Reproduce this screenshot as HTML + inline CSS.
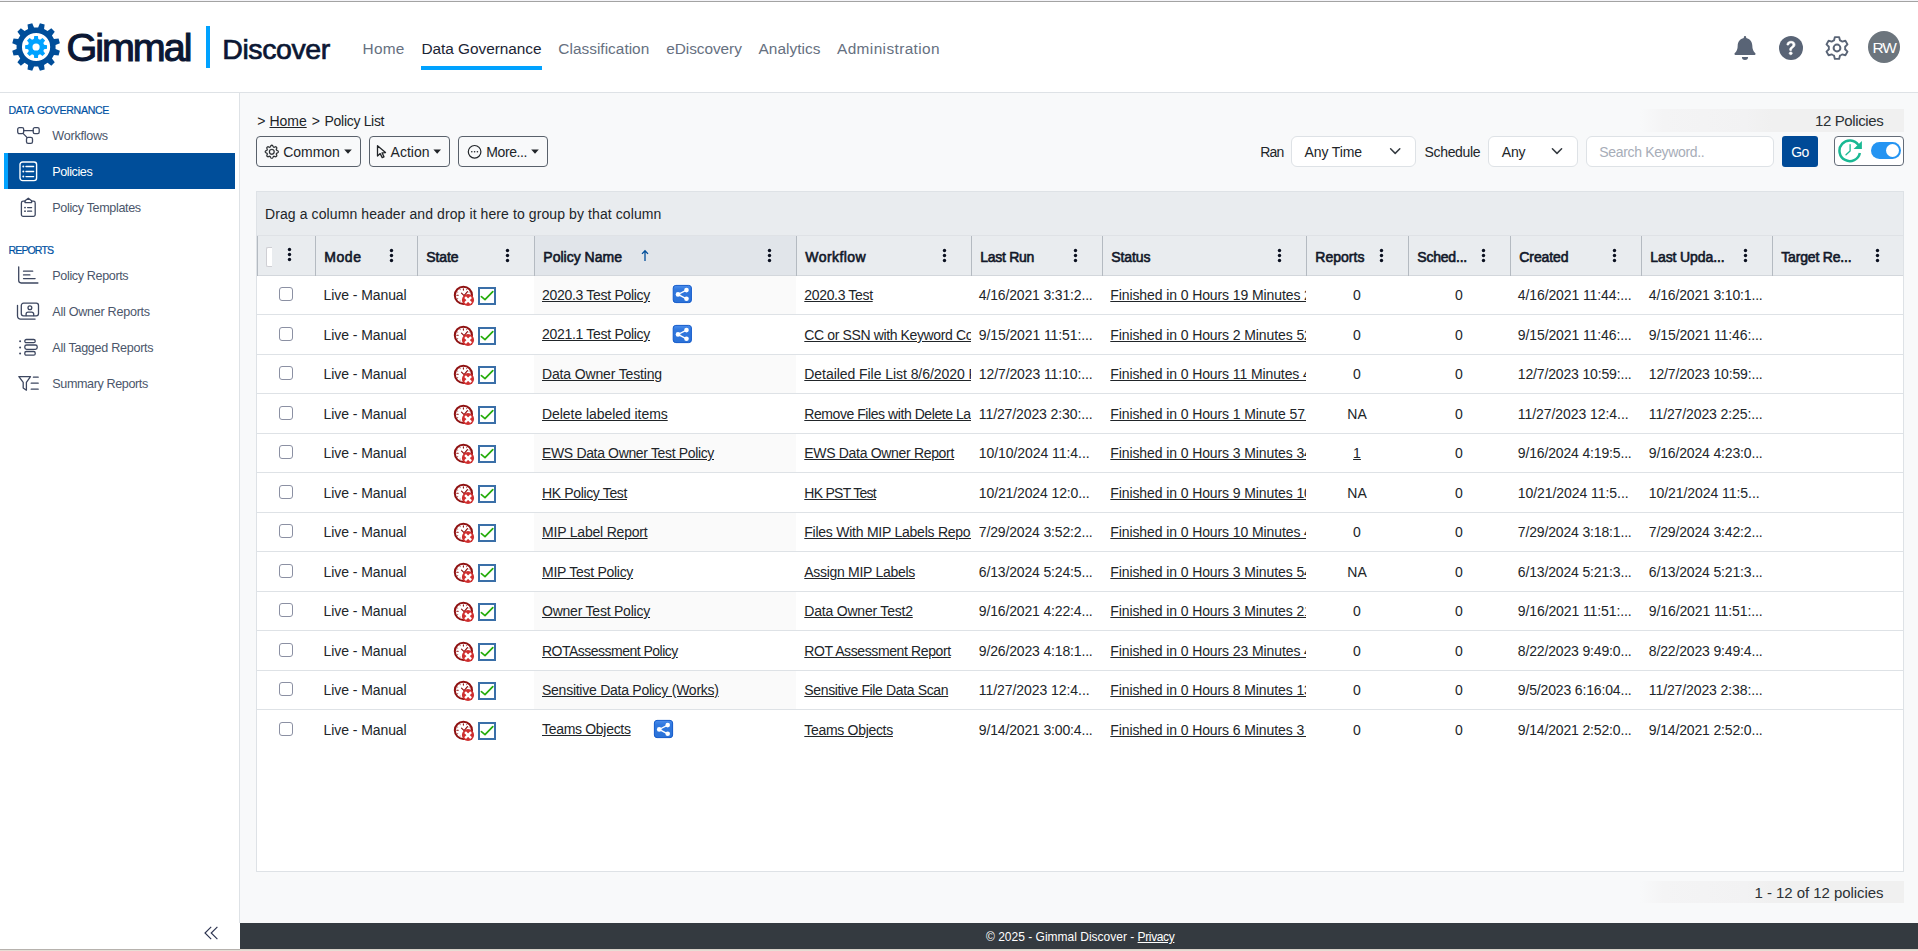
<!DOCTYPE html>
<html lang="en">
<head>
<meta charset="utf-8">
<title>Policy List - Gimmal Discover</title>
<style>
html,body{margin:0;padding:0}
body{width:1918px;height:951px;overflow:hidden;background:#fff;position:relative;font-family:"Liberation Sans",sans-serif;color:#212529}
.a{position:absolute;display:block}
.t{position:absolute;white-space:pre;line-height:1;display:block}
.clip{overflow:hidden}
.top{position:absolute;left:0;top:0;width:1918px;height:2px;background:linear-gradient(#f4f4f8 0,#f4f4f8 50%,#a3a3a3 50%,#a3a3a3 100%);}
.bot{position:absolute;left:0;top:949px;width:1918px;height:2px;background:linear-gradient(#d9d2ca 0,#d9d2ca 50%,#e6ddd4 50%,#e6ddd4 100%)}
.bot2{position:absolute;left:0;top:949px;width:240px;height:1px;background:#b6b2ad}
</style>
</head>
<body>
<div class="a" style="left:0px;top:0px;width:1918px;height:92px;background:#fff;border-bottom:1px solid #dee2e6;"></div>
<svg class="a" style="left:12px;top:23px" width="48" height="48" ><path fill="#004e9a" fill-rule="evenodd" d="M26.12 4.49 L27.90 0.19 L32.65 1.46 L32.04 6.07 L35.59 8.12 L39.29 5.29 L42.76 8.76 L39.93 12.46 L41.98 16.01 L46.59 15.40 L47.86 20.15 L43.56 21.93 L43.56 26.03 L47.86 27.81 L46.59 32.56 L41.98 31.95 L39.93 35.50 L42.76 39.20 L39.29 42.67 L35.59 39.84 L32.04 41.89 L32.65 46.50 L27.90 47.77 L26.12 43.47 L22.02 43.47 L20.24 47.77 L15.49 46.50 L16.10 41.89 L12.55 39.84 L8.85 42.67 L5.38 39.20 L8.21 35.50 L6.16 31.95 L1.55 32.56 L0.28 27.81 L4.58 26.03 L4.58 21.93 L0.28 20.15 L1.55 15.40 L6.16 16.01 L8.21 12.46 L5.38 8.76 L8.85 5.29 L12.55 8.12 L16.10 6.07 L15.49 1.46 L20.24 0.19 L22.02 4.49Z M24.07 9.88a14.1 14.1 0 1 0 0 28.2a14.1 14.1 0 1 0 0-28.2z"/><path fill="#00a2ff" fill-rule="evenodd" d="M21.82 15.99 L22.25 13.03 L25.89 13.03 L26.32 15.99 L28.13 16.74 L30.52 14.95 L33.10 17.53 L31.31 19.92 L32.06 21.73 L35.02 22.16 L35.02 25.80 L32.06 26.23 L31.31 28.04 L33.10 30.43 L30.52 33.01 L28.13 31.22 L26.32 31.97 L25.89 34.93 L22.25 34.93 L21.82 31.97 L20.01 31.22 L17.62 33.01 L15.04 30.43 L16.83 28.04 L16.08 26.23 L13.12 25.80 L13.12 22.16 L16.08 21.73 L16.83 19.92 L15.04 17.53 L17.62 14.95 L20.01 16.74Z M24.07 20.38a3.6 3.6 0 1 0 0 7.2a3.6 3.6 0 1 0 0-7.2z"/></svg>
<span class="t" style="left:66.50px;top:28px;font-size:39.5px;letter-spacing:-2.010px;color:#0b1733;-webkit-text-stroke:1.1px #0b1733;">Gimmal</span>
<div class="a" style="left:206px;top:26px;width:4px;height:42px;background:#00a2ff;"></div>
<span class="t" style="left:222.30px;top:35px;font-size:28.5px;letter-spacing:-0.420px;color:#0b1733;-webkit-text-stroke:0.7px #0b1733;">Discover</span>
<span class="t" style="left:362.60px;top:41px;font-size:15.4px;letter-spacing:0.234px;color:#66707f;">Home</span>
<span class="t" style="left:421.50px;top:41px;font-size:15.4px;letter-spacing:-0.043px;color:#1b2434;">Data Governance</span>
<span class="t" style="left:558.30px;top:41px;font-size:15.4px;letter-spacing:0.023px;color:#66707f;">Classification</span>
<span class="t" style="left:666.30px;top:41px;font-size:15.4px;letter-spacing:-0.062px;color:#66707f;">eDiscovery</span>
<span class="t" style="left:758.50px;top:41px;font-size:15.4px;letter-spacing:0.045px;color:#66707f;">Analytics</span>
<span class="t" style="left:837.00px;top:41px;font-size:15.4px;letter-spacing:0.392px;color:#66707f;">Administration</span>
<div class="a" style="left:421px;top:66px;width:121px;height:4px;background:#00a2ff;"></div>
<svg class="a" style="left:1733px;top:36px" width="24" height="25" ><path fill="#596476" d="M12 0a1.2 1.2 0 0 1 1.2 1.2v0.9C17 2.9 19.3 6 19.3 9.6C19.3 13.5 20.3 15.3 22.3 17.2a1 1 0 0 1-0.7 1.7H2.4a1 1 0 0 1-0.7-1.7C3.7 15.3 4.7 13.5 4.7 9.6C4.7 6 7 2.9 10.8 2.1V1.2A1.2 1.2 0 0 1 12 0Z"/><path fill="#596476" d="M8.9 21.1H15.1a3.1 2.9 0 0 1-6.2 0z"/></svg>
<svg class="a" style="left:1779px;top:36px" width="24" height="24" ><g transform="translate(0.000 0.000) scale(1.5000)"><circle cx="8" cy="8" r="8" fill="#596476"/><path fill="#fff" stroke="#fff" stroke-width="0.45" stroke-linejoin="round" d="M5.496 6.033h.825c.138 0 .248-.113.266-.25.09-.656.54-1.134 1.342-1.134.686 0 1.314.343 1.314 1.168 0 .635-.374.927-.965 1.371-.673.489-1.206 1.06-1.168 1.987l.003.217a.25.25 0 0 0 .25.246h.811a.25.25 0 0 0 .25-.25v-.105c0-.718.273-.927 1.01-1.486.609-.463 1.244-.977 1.244-2.056 0-1.511-1.276-2.241-2.673-2.241-1.267 0-2.655.59-2.75 2.286a.237.237 0 0 0 .241.247zm2.325 6.443c.61 0 1.029-.394 1.029-.927 0-.552-.42-.94-1.029-.94-.584 0-1.009.388-1.009.94 0 .533.425.927 1.01.927z"/></g></svg>
<svg class="a" style="left:1825px;top:36px" width="24" height="24" ><path fill="none" stroke="#596476" stroke-width="1.9" stroke-linejoin="round" d="M9.06 4.34L9.88 1.10L14.12 1.10L14.94 4.34A8.2 8.2 0 0 1 17.16 5.63L20.38 4.72L22.50 8.39L20.10 10.72A8.2 8.2 0 0 1 20.10 13.28L22.50 15.61L20.38 19.28L17.16 18.37A8.2 8.2 0 0 1 14.94 19.66L14.12 22.90L9.88 22.90L9.06 19.66A8.2 8.2 0 0 1 6.84 18.37L3.62 19.28L1.50 15.61L3.90 13.28A8.2 8.2 0 0 1 3.90 10.72L1.50 8.39L3.62 4.72L6.84 5.63A8.2 8.2 0 0 1 9.06 4.34Z"/><circle cx="12" cy="12" r="3.4" fill="none" stroke="#596476" stroke-width="2"/></svg>
<div class="a" style="left:1868px;top:31px;width:32px;height:32px;background:#6c757d;border-radius:50%;"></div>
<span class="t" style="left:1872.50px;top:40px;font-size:15.5px;letter-spacing:-1.273px;color:#fff;">RW</span>
<div class="a" style="left:0px;top:93px;width:240px;height:856px;background:#fff;"></div>
<div class="a" style="left:239px;top:93px;width:1px;height:830px;background:#dee2e6;"></div>
<span class="t" style="left:8.50px;top:105px;font-size:10.6px;letter-spacing:-0.319px;color:#0052a3;-webkit-text-stroke:0.2px #0052a3;word-spacing:1px;">DATA GOVERNANCE</span>
<span class="t" style="left:8.50px;top:245px;font-size:10.6px;letter-spacing:-0.919px;color:#0052a3;-webkit-text-stroke:0.2px #0052a3;">REPORTS</span>
<div class="a" style="left:4px;top:153px;width:231px;height:36px;background:#004e9a;border-left:4px solid #00a2ff;box-sizing:border-box;"></div>
<span class="t" style="left:52.30px;top:130px;font-size:12.6px;letter-spacing:-0.251px;color:#4b566b;">Workflows</span>
<span class="t" style="left:52.30px;top:166px;font-size:12.6px;letter-spacing:-0.426px;color:#fff;">Policies</span>
<span class="t" style="left:52.30px;top:202px;font-size:12.6px;letter-spacing:-0.360px;color:#4b566b;">Policy Templates</span>
<span class="t" style="left:52.30px;top:270px;font-size:12.6px;letter-spacing:-0.372px;color:#4b566b;">Policy Reports</span>
<span class="t" style="left:52.30px;top:306px;font-size:12.6px;letter-spacing:-0.276px;color:#4b566b;">All Owner Reports</span>
<span class="t" style="left:52.30px;top:342px;font-size:12.6px;letter-spacing:-0.288px;color:#4b566b;">All Tagged Reports</span>
<span class="t" style="left:52.30px;top:378px;font-size:12.6px;letter-spacing:-0.399px;color:#4b566b;">Summary Reports</span>
<svg class="a" style="left:16px;top:126px" width="26" height="20" ><g fill="none" stroke="#3d4760" stroke-width="1.3" stroke-linecap="round" stroke-linejoin="round"><rect x="1.7" y="1.7" width="6" height="6" rx="1.6"/><rect x="17.2" y="1.7" width="6" height="6" rx="1.6"/><rect x="10.5" y="11.3" width="6" height="6" rx="1.6"/><path d="M7.7 4.7H17.2M7 7.4L11.2 11.6"/></g></svg>
<svg class="a" style="left:19px;top:161px" width="19" height="21" ><g fill="none" stroke="#fff" stroke-width="1.4" stroke-linecap="round"><rect x="1" y="1" width="16.6" height="18.6" rx="2.6"/><path d="M7 5.5H14.6M7 10.5H14.6M7 15.6H14.6"/></g><g fill="#fff"><circle cx="4.3" cy="5.5" r="1"/><circle cx="4.3" cy="10.5" r="1"/><circle cx="4.3" cy="15.6" r="1"/></g></svg>
<svg class="a" style="left:20px;top:197px" width="17" height="21" ><g fill="none" stroke="#3d4760" stroke-width="1.3" stroke-linecap="round" stroke-linejoin="round"><path d="M5 4.2H3.2a1.8 1.8 0 0 0-1.8 1.8V17.6a1.8 1.8 0 0 0 1.8 1.8H13.4a1.8 1.8 0 0 0 1.8-1.8V6a1.8 1.8 0 0 0-1.8-1.8H11.6"/><path d="M5 5.6V3.8L8.3 1.2L11.6 3.8V5.6Z"/><path d="M7.6 10.6H11.6M7.6 14.2H11.6"/></g><g fill="#3d4760"><circle cx="5" cy="10.6" r="0.9"/><circle cx="5" cy="14.2" r="0.9"/></g></svg>
<svg class="a" style="left:17px;top:266px" width="23" height="18" ><g transform="translate(0.500 0.000)"><g fill="none" stroke="#3d4760" stroke-width="1.3" stroke-linecap="round" stroke-linejoin="round"><path d="M1.2 0.8V14.6a2.4 2.4 0 0 0 2.4 2.4H20.4"/><path d="M6 5.2H15.2M6 8.9H12.4M6 12.6H17.6"/></g></g></svg>
<svg class="a" style="left:16px;top:302px" width="24" height="19" ><g transform="translate(0.500 0.300)"><g fill="none" stroke="#3d4760" stroke-width="1.3" stroke-linecap="round" stroke-linejoin="round"><rect x="4.8" y="0.9" width="17.2" height="12.6" rx="2.2"/><path d="M1 3V13.8a3 3 0 0 0 3 3H18.6"/><circle cx="13.4" cy="5.4" r="1.9"/><path d="M9.6 13.2V11.8a2 2 0 0 1 2-2H15.2a2 2 0 0 1 2 2V13.2"/></g></g></svg>
<svg class="a" style="left:18px;top:338px" width="21" height="19" ><g transform="translate(0.800 0.600)"><g fill="none" stroke="#3d4760" stroke-width="1.3" stroke-linecap="round" stroke-linejoin="round"><rect x="6" y="0.9" width="10.4" height="3.2" rx="1.5"/><rect x="6" y="6.4" width="12.4" height="4.4" rx="1.8"/><rect x="6" y="12.9" width="10.4" height="3.7" rx="1.5"/></g><g fill="#3d4760"><circle cx="1.3" cy="2.6" r="1"/><circle cx="1.3" cy="8.8" r="1"/><circle cx="1.3" cy="15" r="1"/></g></g></svg>
<svg class="a" style="left:18px;top:375px" width="21" height="17" ><g transform="translate(0.000 0.600)"><g fill="none" stroke="#3d4760" stroke-width="1.3" stroke-linecap="round" stroke-linejoin="round"><path d="M0.9 1H12.5L8.4 6.8V14.6L5.2 12.4V6.8Z"/><path d="M15.4 1.6H20.2M13.2 7.6H20.2M13.2 13.6H20.2"/></g></g></svg>
<svg class="a" style="left:204px;top:926px" width="15" height="14" ><g fill="none" stroke="#2c3350" stroke-width="1.15" stroke-linecap="butt" stroke-linejoin="miter"><path d="M7.2 0.9L1 7L7.2 13.1M13.4 0.9L7.2 7L13.4 13.1"/></g></svg>
<div class="a" style="left:240px;top:93px;width:1678px;height:830px;background:#f8f9fa;"></div>
<span class="t" style="left:257.20px;top:114px;font-size:14px;letter-spacing:-0.188px;color:#212529;">&gt;</span>
<span class="t" style="left:269.50px;top:114px;font-size:14px;letter-spacing:-0.040px;color:#212529;text-decoration:underline;">Home</span>
<span class="t" style="left:311.80px;top:114px;font-size:14px;letter-spacing:-0.188px;color:#212529;">&gt;</span>
<span class="t" style="left:324.60px;top:114px;font-size:14px;letter-spacing:-0.312px;color:#212529;">Policy List</span>
<div class="a" style="left:256px;top:136px;width:105px;height:31px;border:1px solid #59616b;border-radius:4px;box-sizing:border-box;background:#f8f9fa;"></div>
<div class="a" style="left:369px;top:136px;width:81px;height:31px;border:1px solid #59616b;border-radius:4px;box-sizing:border-box;background:#f8f9fa;"></div>
<div class="a" style="left:458px;top:136px;width:90px;height:31px;border:1px solid #59616b;border-radius:4px;box-sizing:border-box;background:#f8f9fa;"></div>
<svg class="a" style="left:264px;top:144px" width="15" height="15" ><g transform="translate(0.800 0.800) scale(0.8750)"><g stroke="#212529" stroke-width="0.35"><path fill="#212529" d="M8 4.754a3.246 3.246 0 1 0 0 6.492 3.246 3.246 0 0 0 0-6.492zM5.754 8a2.246 2.246 0 1 1 4.492 0 2.246 2.246 0 0 1-4.492 0z"/><path fill="#212529" d="M9.796 1.343c-.527-1.79-3.065-1.79-3.592 0l-.094.319a.873.873 0 0 1-1.255.52l-.292-.16c-1.64-.892-3.433.902-2.54 2.541l.159.292a.873.873 0 0 1-.52 1.255l-.319.094c-1.79.527-1.79 3.065 0 3.592l.319.094a.873.873 0 0 1 .52 1.255l-.16.292c-.892 1.64.901 3.434 2.541 2.54l.292-.159a.873.873 0 0 1 1.255.52l.094.319c.527 1.79 3.065 1.79 3.592 0l.094-.319a.873.873 0 0 1 1.255-.52l.292.16c1.64.893 3.434-.902 2.54-2.541l-.159-.292a.873.873 0 0 1 .52-1.255l.319-.094c1.79-.527 1.79-3.065 0-3.592l-.319-.094a.873.873 0 0 1-.52-1.255l.16-.292c.893-1.64-.902-3.433-2.541-2.54l-.292.159a.873.873 0 0 1-1.255-.52l-.094-.319zm-2.633.283c.246-.835 1.428-.835 1.674 0l.094.319a1.873 1.873 0 0 0 2.693 1.115l.291-.16c.764-.415 1.6.42 1.184 1.185l-.159.292a1.873 1.873 0 0 0 1.116 2.692l.318.094c.835.246.835 1.428 0 1.674l-.319.094a1.873 1.873 0 0 0-1.115 2.693l.16.291c.415.764-.42 1.6-1.185 1.184l-.291-.159a1.873 1.873 0 0 0-2.693 1.116l-.094.318c-.246.835-1.428.835-1.674 0l-.094-.319a1.873 1.873 0 0 0-2.692-1.115l-.292.16c-.764.415-1.6-.42-1.184-1.185l.159-.291A1.873 1.873 0 0 0 1.945 8.93l-.319-.094c-.835-.246-.835-1.428 0-1.674l.319-.094A1.873 1.873 0 0 0 3.06 4.377l-.16-.292c-.415-.764.42-1.6 1.185-1.184l.292.159a1.873 1.873 0 0 0 2.692-1.115l.094-.319z"/></g></g></svg>
<span class="t" style="left:283.30px;top:145px;font-size:14px;letter-spacing:-0.049px;color:#212529;">Common</span>
<svg class="a" style="left:344px;top:149px" width="9" height="6" ><g transform="translate(0.200 0.500)"><path fill="#212529" d="M0 0H7.6L3.8 4.2Z"/></g></svg>
<svg class="a" style="left:376px;top:144px" width="11" height="15" ><g transform="translate(0.600 0.800)"><path fill="none" stroke="#212529" stroke-width="1.3" stroke-linejoin="round" d="M0.9 0.9V11.2L3.6 8.8L5.6 12.8L7.4 12L5.5 8.1L8.9 7.8Z"/></g></svg>
<span class="t" style="left:390.50px;top:145px;font-size:14px;letter-spacing:0.046px;color:#212529;">Action</span>
<svg class="a" style="left:433px;top:149px" width="9" height="6" ><g transform="translate(0.400 0.500)"><path fill="#212529" d="M0 0H7.6L3.8 4.2Z"/></g></svg>
<svg class="a" style="left:467px;top:144px" width="15" height="15" ><g transform="translate(0.600 0.800)"><circle cx="7" cy="7" r="6.3" fill="none" stroke="#212529" stroke-width="1.2"/><g fill="#212529"><circle cx="4.2" cy="7" r="0.8"/><circle cx="7" cy="7" r="0.8"/><circle cx="9.8" cy="7" r="0.8"/></g></g></svg>
<span class="t" style="left:486.30px;top:145px;font-size:14px;letter-spacing:-0.397px;color:#212529;">More...</span>
<svg class="a" style="left:531px;top:149px" width="9" height="6" ><g transform="translate(0.200 0.500)"><path fill="#212529" d="M0 0H7.6L3.8 4.2Z"/></g></svg>
<div class="a" style="left:1640px;top:109px;width:264px;height:23px;background:linear-gradient(90deg,rgba(244,244,245,0) 0%,#f4f4f5 9%,#f2f2f3 40%,#f0f0f0 50%,#f0f0f0 100%);"></div>
<span class="t" style="left:1815.00px;top:113px;font-size:15px;letter-spacing:-0.386px;color:#2b3035;">12 Policies</span>
<span class="t" style="left:1260.30px;top:145px;font-size:14px;letter-spacing:-0.896px;color:#212529;">Ran</span>
<div class="a" style="left:1291px;top:136px;width:125px;height:31px;border:1px solid #dee2e6;border-radius:6px;box-sizing:border-box;background:#fff;"></div>
<span class="t" style="left:1304.60px;top:145px;font-size:14px;letter-spacing:-0.120px;color:#212529;">Any Time</span>
<svg class="a" style="left:1389px;top:147px" width="13" height="8" ><g transform="translate(0.600 0.800)"><path fill="none" stroke="#343a40" stroke-width="1.5" stroke-linecap="round" stroke-linejoin="round" d="M1 1L5.6 5.6L10.2 1"/></g></svg>
<span class="t" style="left:1424.60px;top:145px;font-size:14px;letter-spacing:-0.361px;color:#212529;">Schedule</span>
<div class="a" style="left:1488px;top:136px;width:90px;height:31px;border:1px solid #dee2e6;border-radius:6px;box-sizing:border-box;background:#fff;"></div>
<span class="t" style="left:1501.80px;top:145px;font-size:14px;letter-spacing:-0.242px;color:#212529;">Any</span>
<svg class="a" style="left:1551px;top:147px" width="13" height="8" ><g transform="translate(0.400 0.800)"><path fill="none" stroke="#343a40" stroke-width="1.5" stroke-linecap="round" stroke-linejoin="round" d="M1 1L5.6 5.6L10.2 1"/></g></svg>
<div class="a" style="left:1586px;top:136px;width:188px;height:31px;border:1px solid #dee2e6;border-radius:6px;box-sizing:border-box;background:#fff;"></div>
<span class="t" style="left:1599.30px;top:145px;font-size:14px;letter-spacing:-0.344px;color:#a7adb8;">Search Keyword..</span>
<div class="a" style="left:1782px;top:136px;width:36px;height:31px;background:#004a97;border-radius:3px;"></div>
<span class="t" style="left:1791.20px;top:145px;font-size:14px;letter-spacing:-0.544px;color:#fff;">Go</span>
<div class="a" style="left:1834px;top:136px;width:70px;height:30px;border:1px solid #646c78;border-radius:4px;box-sizing:border-box;background:#fff;"></div>
<svg class="a" style="left:1838px;top:139px" width="25" height="24" ><path fill="none" stroke="#19b893" stroke-width="2.5" d="M20.44 6.19A10.3 10.3 0 1 0 21.87 13.94"/><path fill="#19b893" d="M23.9 1.9V9.9H15.6Z"/><path fill="none" stroke="#19b893" stroke-width="1.3" stroke-linecap="round" stroke-linejoin="round" d="M12.1 5.6V12L8 15.7"/></svg>
<div class="a" style="left:1871px;top:142px;width:30px;height:17px;background:#2494f2;border-radius:8.5px;"></div>
<div class="a" style="left:1885.9px;top:143.8px;width:13.4px;height:13.4px;background:#fff;border-radius:50%;"></div>
<div class="a" style="left:256px;top:191px;width:1648px;height:681px;background:#fff;border:1px solid #dee2e6;box-sizing:border-box;"></div>
<div class="a" style="left:257px;top:192px;width:1646px;height:43px;background:#e9ecef;"></div>
<span class="t" style="left:265.00px;top:207px;font-size:14px;letter-spacing:0.095px;color:#212529;">Drag a column header and drop it here to group by that column</span>
<div class="a" style="left:257px;top:235px;width:1646px;height:41px;background:#e9ecef;border-bottom:1px solid #d3d7dc;border-top:1px solid #dfe2e6;box-sizing:border-box;"></div>
<div class="a" style="left:535px;top:236px;width:262px;height:39px;background:#e1e5ea;"></div>
<div class="a" style="left:257px;top:236px;width:1px;height:40px;background:#b4bac1;"></div>
<div class="a" style="left:315px;top:236px;width:1px;height:40px;background:#b4bac1;"></div>
<div class="a" style="left:417px;top:236px;width:1px;height:40px;background:#b4bac1;"></div>
<div class="a" style="left:534px;top:236px;width:1px;height:40px;background:#b4bac1;"></div>
<div class="a" style="left:796px;top:236px;width:1px;height:40px;background:#b4bac1;"></div>
<div class="a" style="left:971px;top:236px;width:1px;height:40px;background:#b4bac1;"></div>
<div class="a" style="left:1102px;top:236px;width:1px;height:40px;background:#b4bac1;"></div>
<div class="a" style="left:1306px;top:236px;width:1px;height:40px;background:#b4bac1;"></div>
<div class="a" style="left:1408px;top:236px;width:1px;height:40px;background:#b4bac1;"></div>
<div class="a" style="left:1510px;top:236px;width:1px;height:40px;background:#b4bac1;"></div>
<div class="a" style="left:1641px;top:236px;width:1px;height:40px;background:#b4bac1;"></div>
<div class="a" style="left:1772px;top:236px;width:1px;height:40px;background:#b4bac1;"></div>
<div class="a" style="left:266px;top:247px;width:6px;height:20px;background:#fff;border-radius:2px 0 0 2px;border:1px solid #cfcfd4;border-right:0;box-sizing:border-box;"></div>
<span class="t" style="left:324.30px;top:250px;font-size:14px;letter-spacing:0.542px;color:#121829;-webkit-text-stroke:0.6px #121829;">Mode</span>
<span class="t" style="left:426.30px;top:250px;font-size:14px;letter-spacing:-0.101px;color:#121829;-webkit-text-stroke:0.6px #121829;">State</span>
<span class="t" style="left:543.30px;top:250px;font-size:14px;letter-spacing:0.010px;color:#121829;-webkit-text-stroke:0.6px #121829;">Policy Name</span>
<span class="t" style="left:805.30px;top:250px;font-size:14px;letter-spacing:0.423px;color:#121829;-webkit-text-stroke:0.6px #121829;">Workflow</span>
<span class="t" style="left:980.30px;top:250px;font-size:14px;letter-spacing:-0.293px;color:#121829;-webkit-text-stroke:0.6px #121829;">Last Run</span>
<span class="t" style="left:1111.30px;top:250px;font-size:14px;letter-spacing:-0.084px;color:#121829;-webkit-text-stroke:0.6px #121829;">Status</span>
<span class="t" style="left:1315.30px;top:250px;font-size:14px;letter-spacing:0.024px;color:#121829;-webkit-text-stroke:0.6px #121829;">Reports</span>
<span class="t" style="left:1417.30px;top:250px;font-size:14px;letter-spacing:-0.209px;color:#121829;-webkit-text-stroke:0.6px #121829;">Sched...</span>
<span class="t" style="left:1519.30px;top:250px;font-size:14px;letter-spacing:-0.087px;color:#121829;-webkit-text-stroke:0.6px #121829;">Created</span>
<span class="t" style="left:1650.30px;top:250px;font-size:14px;letter-spacing:-0.108px;color:#121829;-webkit-text-stroke:0.6px #121829;">Last Upda...</span>
<span class="t" style="left:1781.30px;top:250px;font-size:14px;letter-spacing:-0.181px;color:#121829;-webkit-text-stroke:0.6px #121829;">Target Re...</span>
<svg class="a" style="left:287px;top:247px" width="5" height="15" ><g transform="translate(0.500 0.500)"><g fill="#0b1020"><circle cx="2" cy="2" r="1.7"/><circle cx="2" cy="7" r="1.7"/><circle cx="2" cy="12" r="1.7"/></g></g></svg>
<svg class="a" style="left:389px;top:248px" width="5" height="15" ><g transform="translate(0.500 0.500)"><g fill="#0b1020"><circle cx="2" cy="2" r="1.7"/><circle cx="2" cy="7" r="1.7"/><circle cx="2" cy="12" r="1.7"/></g></g></svg>
<svg class="a" style="left:505px;top:248px" width="5" height="15" ><g transform="translate(0.500 0.500)"><g fill="#0b1020"><circle cx="2" cy="2" r="1.7"/><circle cx="2" cy="7" r="1.7"/><circle cx="2" cy="12" r="1.7"/></g></g></svg>
<svg class="a" style="left:767px;top:248px" width="5" height="15" ><g transform="translate(0.500 0.500)"><g fill="#0b1020"><circle cx="2" cy="2" r="1.7"/><circle cx="2" cy="7" r="1.7"/><circle cx="2" cy="12" r="1.7"/></g></g></svg>
<svg class="a" style="left:942px;top:248px" width="5" height="15" ><g transform="translate(0.500 0.500)"><g fill="#0b1020"><circle cx="2" cy="2" r="1.7"/><circle cx="2" cy="7" r="1.7"/><circle cx="2" cy="12" r="1.7"/></g></g></svg>
<svg class="a" style="left:1073px;top:248px" width="5" height="15" ><g transform="translate(0.500 0.500)"><g fill="#0b1020"><circle cx="2" cy="2" r="1.7"/><circle cx="2" cy="7" r="1.7"/><circle cx="2" cy="12" r="1.7"/></g></g></svg>
<svg class="a" style="left:1277px;top:248px" width="5" height="15" ><g transform="translate(0.500 0.500)"><g fill="#0b1020"><circle cx="2" cy="2" r="1.7"/><circle cx="2" cy="7" r="1.7"/><circle cx="2" cy="12" r="1.7"/></g></g></svg>
<svg class="a" style="left:1379px;top:248px" width="5" height="15" ><g transform="translate(0.500 0.500)"><g fill="#0b1020"><circle cx="2" cy="2" r="1.7"/><circle cx="2" cy="7" r="1.7"/><circle cx="2" cy="12" r="1.7"/></g></g></svg>
<svg class="a" style="left:1481px;top:248px" width="5" height="15" ><g transform="translate(0.500 0.500)"><g fill="#0b1020"><circle cx="2" cy="2" r="1.7"/><circle cx="2" cy="7" r="1.7"/><circle cx="2" cy="12" r="1.7"/></g></g></svg>
<svg class="a" style="left:1612px;top:248px" width="5" height="15" ><g transform="translate(0.500 0.500)"><g fill="#0b1020"><circle cx="2" cy="2" r="1.7"/><circle cx="2" cy="7" r="1.7"/><circle cx="2" cy="12" r="1.7"/></g></g></svg>
<svg class="a" style="left:1743px;top:248px" width="5" height="15" ><g transform="translate(0.500 0.500)"><g fill="#0b1020"><circle cx="2" cy="2" r="1.7"/><circle cx="2" cy="7" r="1.7"/><circle cx="2" cy="12" r="1.7"/></g></g></svg>
<svg class="a" style="left:1875px;top:248px" width="5" height="15" ><g transform="translate(0.500 0.500)"><g fill="#0b1020"><circle cx="2" cy="2" r="1.7"/><circle cx="2" cy="7" r="1.7"/><circle cx="2" cy="12" r="1.7"/></g></g></svg>
<svg class="a" style="left:641px;top:249px" width="8" height="13" ><g transform="translate(0.000 0.500)"><path d="M4 11.4V1.4M1 4.4L4 1.2L7 4.4" fill="none" stroke="#004e9a" stroke-width="1.3" stroke-linejoin="miter"/></g></svg>
<div class="a" style="left:534px;top:276px;width:262px;height:38px;background:#fafafa;"></div>
<div class="a" style="left:257px;top:314px;width:1646px;height:1px;background:#dee2e6;"></div>
<div class="a" style="left:279px;top:287px;width:14px;height:14px;border:1px solid #8b90a3;border-radius:3px;box-sizing:border-box;background:#fff;"></div>
<span class="t" style="left:323.60px;top:288px;font-size:14px;letter-spacing:-0.081px;color:#212529;">Live - Manual</span>
<svg class="a" style="left:453px;top:285px" width="23" height="23" ><g transform="translate(0.500 0.100)"><circle cx="9.9" cy="10.2" r="8.6" fill="#fff" stroke="#8f1111" stroke-width="2"/><path d="M9.90 3.60L9.90 5.00" stroke="#8f1111" stroke-width="1.1" stroke-linecap="round"/><circle cx="13.20" cy="4.48" r="0.55" fill="#8f1111" opacity="0.8"/><circle cx="15.62" cy="6.90" r="0.55" fill="#8f1111" opacity="0.8"/><circle cx="6.60" cy="15.92" r="0.55" fill="#8f1111" opacity="0.8"/><circle cx="4.18" cy="13.50" r="0.55" fill="#8f1111" opacity="0.8"/><path d="M3.30 10.20L4.70 10.20" stroke="#8f1111" stroke-width="1.1" stroke-linecap="round"/><circle cx="4.18" cy="6.90" r="0.55" fill="#8f1111" opacity="0.8"/><circle cx="6.60" cy="4.48" r="0.55" fill="#8f1111" opacity="0.8"/><path d="M10.6 10.6L14 6.6M10.6 10.6L8 8" fill="none" stroke="#8f1111" stroke-width="1.2" stroke-linecap="round"/><circle cx="14.5" cy="14.9" r="6.1" fill="#cf2f2f"/><path d="M11.6 12L17.6 18M17.6 12L11.6 18" stroke="#fff" stroke-width="2.4" stroke-linecap="butt"/></g></svg>
<svg class="a" style="left:478px;top:287px" width="18" height="18" ><rect x="1" y="1" width="16" height="16" fill="#fff" stroke="#3a6fa8" stroke-width="2"/><path d="M3.4 9.6L7 12.6L14.8 4.6" fill="none" stroke="#25ac0a" stroke-width="1.7" stroke-linecap="round" stroke-linejoin="round"/></svg>
<span class="t" style="left:542.00px;top:288px;font-size:14px;letter-spacing:-0.299px;color:#212529;text-decoration:underline;">2020.3 Test Policy</span>
<svg class="a" style="left:671px;top:284px" width="22" height="20" ><g transform="translate(0.800 0.000)"><defs><linearGradient id="sg" x1="0" y1="0" x2="0" y2="1"><stop offset="0" stop-color="#4c8dec"/><stop offset="0.25" stop-color="#3078df"/><stop offset="1" stop-color="#2b72d8"/></linearGradient></defs><rect x="0.2" y="0.2" width="20.6" height="19.6" rx="3.4" fill="#fff" opacity="0.9"/><rect x="1.4" y="1.4" width="18.2" height="17.2" rx="2.6" fill="url(#sg)" stroke="#125aca" stroke-width="1"/><path d="M14.7 6.1L6.2 10.4L14.7 14.8" fill="none" stroke="#fff" stroke-width="1.3"/><g fill="#fff"><circle cx="6.2" cy="10.4" r="2.3"/><circle cx="14.7" cy="6.1" r="2.3"/><circle cx="14.7" cy="14.8" r="2.3"/></g></g></svg>
<span class="t" style="left:804.30px;top:288px;font-size:14px;letter-spacing:-0.340px;color:#212529;text-decoration:underline;">2020.3 Test</span>
<span class="t" style="left:978.80px;top:288px;font-size:14px;letter-spacing:-0.156px;color:#212529;">4/16/2021 3:31:2...</span>
<div class="a clip" style="left:1103px;top:276px;width:203px;height:38px"><span class="t" style="left:7.30px;top:12px;font-size:14px;color:#212529;text-decoration:underline;letter-spacing:-0.1px;">Finished in 0 Hours 19 Minutes 25 Seconds</span></div>
<span class="t" style="left:1353.10px;top:288px;font-size:14px;color:#212529;">0</span>
<span class="t" style="left:1455.10px;top:288px;font-size:14px;color:#212529;">0</span>
<span class="t" style="left:1517.80px;top:288px;font-size:14px;letter-spacing:-0.102px;color:#212529;">4/16/2021 11:44:...</span>
<span class="t" style="left:1648.80px;top:288px;font-size:14px;letter-spacing:-0.156px;color:#212529;">4/16/2021 3:10:1...</span>
<div class="a" style="left:257px;top:354px;width:1646px;height:1px;background:#dee2e6;"></div>
<div class="a" style="left:279px;top:327px;width:14px;height:14px;border:1px solid #8b90a3;border-radius:3px;box-sizing:border-box;background:#fff;"></div>
<span class="t" style="left:323.60px;top:328px;font-size:14px;letter-spacing:-0.081px;color:#212529;">Live - Manual</span>
<svg class="a" style="left:453px;top:325px" width="23" height="23" ><g transform="translate(0.500 0.100)"><circle cx="9.9" cy="10.2" r="8.6" fill="#fff" stroke="#8f1111" stroke-width="2"/><path d="M9.90 3.60L9.90 5.00" stroke="#8f1111" stroke-width="1.1" stroke-linecap="round"/><circle cx="13.20" cy="4.48" r="0.55" fill="#8f1111" opacity="0.8"/><circle cx="15.62" cy="6.90" r="0.55" fill="#8f1111" opacity="0.8"/><circle cx="6.60" cy="15.92" r="0.55" fill="#8f1111" opacity="0.8"/><circle cx="4.18" cy="13.50" r="0.55" fill="#8f1111" opacity="0.8"/><path d="M3.30 10.20L4.70 10.20" stroke="#8f1111" stroke-width="1.1" stroke-linecap="round"/><circle cx="4.18" cy="6.90" r="0.55" fill="#8f1111" opacity="0.8"/><circle cx="6.60" cy="4.48" r="0.55" fill="#8f1111" opacity="0.8"/><path d="M10.6 10.6L14 6.6M10.6 10.6L8 8" fill="none" stroke="#8f1111" stroke-width="1.2" stroke-linecap="round"/><circle cx="14.5" cy="14.9" r="6.1" fill="#cf2f2f"/><path d="M11.6 12L17.6 18M17.6 12L11.6 18" stroke="#fff" stroke-width="2.4" stroke-linecap="butt"/></g></svg>
<svg class="a" style="left:478px;top:327px" width="18" height="18" ><rect x="1" y="1" width="16" height="16" fill="#fff" stroke="#3a6fa8" stroke-width="2"/><path d="M3.4 9.6L7 12.6L14.8 4.6" fill="none" stroke="#25ac0a" stroke-width="1.7" stroke-linecap="round" stroke-linejoin="round"/></svg>
<span class="t" style="left:542.00px;top:327px;font-size:14px;letter-spacing:-0.299px;color:#212529;text-decoration:underline;">2021.1 Test Policy</span>
<svg class="a" style="left:671px;top:324px" width="22" height="20" ><g transform="translate(0.800 0.000)"><defs><linearGradient id="sg" x1="0" y1="0" x2="0" y2="1"><stop offset="0" stop-color="#4c8dec"/><stop offset="0.25" stop-color="#3078df"/><stop offset="1" stop-color="#2b72d8"/></linearGradient></defs><rect x="0.2" y="0.2" width="20.6" height="19.6" rx="3.4" fill="#fff" opacity="0.9"/><rect x="1.4" y="1.4" width="18.2" height="17.2" rx="2.6" fill="url(#sg)" stroke="#125aca" stroke-width="1"/><path d="M14.7 6.1L6.2 10.4L14.7 14.8" fill="none" stroke="#fff" stroke-width="1.3"/><g fill="#fff"><circle cx="6.2" cy="10.4" r="2.3"/><circle cx="14.7" cy="6.1" r="2.3"/><circle cx="14.7" cy="14.8" r="2.3"/></g></g></svg>
<div class="a clip" style="left:797px;top:315px;width:174px;height:39px"><span class="t" style="left:7.30px;top:13px;font-size:14px;color:#212529;text-decoration:underline;letter-spacing:-0.373px;">CC or SSN with Keyword Combo</span></div>
<span class="t" style="left:978.80px;top:328px;font-size:14px;letter-spacing:-0.102px;color:#212529;">9/15/2021 11:51:...</span>
<div class="a clip" style="left:1103px;top:315px;width:203px;height:39px"><span class="t" style="left:7.30px;top:13px;font-size:14px;color:#212529;text-decoration:underline;letter-spacing:-0.1px;">Finished in 0 Hours 2 Minutes 52 Seconds</span></div>
<span class="t" style="left:1353.10px;top:328px;font-size:14px;color:#212529;">0</span>
<span class="t" style="left:1455.10px;top:328px;font-size:14px;color:#212529;">0</span>
<span class="t" style="left:1517.80px;top:328px;font-size:14px;letter-spacing:-0.102px;color:#212529;">9/15/2021 11:46:...</span>
<span class="t" style="left:1648.80px;top:328px;font-size:14px;letter-spacing:-0.102px;color:#212529;">9/15/2021 11:46:...</span>
<div class="a" style="left:534px;top:355px;width:262px;height:38px;background:#fafafa;"></div>
<div class="a" style="left:257px;top:393px;width:1646px;height:1px;background:#dee2e6;"></div>
<div class="a" style="left:279px;top:366px;width:14px;height:14px;border:1px solid #8b90a3;border-radius:3px;box-sizing:border-box;background:#fff;"></div>
<span class="t" style="left:323.60px;top:367px;font-size:14px;letter-spacing:-0.081px;color:#212529;">Live - Manual</span>
<svg class="a" style="left:453px;top:364px" width="23" height="23" ><g transform="translate(0.500 0.100)"><circle cx="9.9" cy="10.2" r="8.6" fill="#fff" stroke="#8f1111" stroke-width="2"/><path d="M9.90 3.60L9.90 5.00" stroke="#8f1111" stroke-width="1.1" stroke-linecap="round"/><circle cx="13.20" cy="4.48" r="0.55" fill="#8f1111" opacity="0.8"/><circle cx="15.62" cy="6.90" r="0.55" fill="#8f1111" opacity="0.8"/><circle cx="6.60" cy="15.92" r="0.55" fill="#8f1111" opacity="0.8"/><circle cx="4.18" cy="13.50" r="0.55" fill="#8f1111" opacity="0.8"/><path d="M3.30 10.20L4.70 10.20" stroke="#8f1111" stroke-width="1.1" stroke-linecap="round"/><circle cx="4.18" cy="6.90" r="0.55" fill="#8f1111" opacity="0.8"/><circle cx="6.60" cy="4.48" r="0.55" fill="#8f1111" opacity="0.8"/><path d="M10.6 10.6L14 6.6M10.6 10.6L8 8" fill="none" stroke="#8f1111" stroke-width="1.2" stroke-linecap="round"/><circle cx="14.5" cy="14.9" r="6.1" fill="#cf2f2f"/><path d="M11.6 12L17.6 18M17.6 12L11.6 18" stroke="#fff" stroke-width="2.4" stroke-linecap="butt"/></g></svg>
<svg class="a" style="left:478px;top:366px" width="18" height="18" ><rect x="1" y="1" width="16" height="16" fill="#fff" stroke="#3a6fa8" stroke-width="2"/><path d="M3.4 9.6L7 12.6L14.8 4.6" fill="none" stroke="#25ac0a" stroke-width="1.7" stroke-linecap="round" stroke-linejoin="round"/></svg>
<span class="t" style="left:542.00px;top:367px;font-size:14px;letter-spacing:-0.150px;color:#212529;text-decoration:underline;">Data Owner Testing</span>
<div class="a clip" style="left:797px;top:355px;width:174px;height:38px"><span class="t" style="left:7.30px;top:12px;font-size:14px;color:#212529;text-decoration:underline;letter-spacing:-0.055px;">Detailed File List 8/6/2020 Report</span></div>
<span class="t" style="left:978.80px;top:367px;font-size:14px;letter-spacing:-0.102px;color:#212529;">12/7/2023 11:10:...</span>
<div class="a clip" style="left:1103px;top:355px;width:203px;height:38px"><span class="t" style="left:7.30px;top:12px;font-size:14px;color:#212529;text-decoration:underline;letter-spacing:-0.1px;">Finished in 0 Hours 11 Minutes 42 Seconds</span></div>
<span class="t" style="left:1353.10px;top:367px;font-size:14px;color:#212529;">0</span>
<span class="t" style="left:1455.10px;top:367px;font-size:14px;color:#212529;">0</span>
<span class="t" style="left:1517.80px;top:367px;font-size:14px;letter-spacing:-0.156px;color:#212529;">12/7/2023 10:59:...</span>
<span class="t" style="left:1648.80px;top:367px;font-size:14px;letter-spacing:-0.156px;color:#212529;">12/7/2023 10:59:...</span>
<div class="a" style="left:257px;top:433px;width:1646px;height:1px;background:#dee2e6;"></div>
<div class="a" style="left:279px;top:406px;width:14px;height:14px;border:1px solid #8b90a3;border-radius:3px;box-sizing:border-box;background:#fff;"></div>
<span class="t" style="left:323.60px;top:407px;font-size:14px;letter-spacing:-0.081px;color:#212529;">Live - Manual</span>
<svg class="a" style="left:453px;top:404px" width="23" height="23" ><g transform="translate(0.500 0.100)"><circle cx="9.9" cy="10.2" r="8.6" fill="#fff" stroke="#8f1111" stroke-width="2"/><path d="M9.90 3.60L9.90 5.00" stroke="#8f1111" stroke-width="1.1" stroke-linecap="round"/><circle cx="13.20" cy="4.48" r="0.55" fill="#8f1111" opacity="0.8"/><circle cx="15.62" cy="6.90" r="0.55" fill="#8f1111" opacity="0.8"/><circle cx="6.60" cy="15.92" r="0.55" fill="#8f1111" opacity="0.8"/><circle cx="4.18" cy="13.50" r="0.55" fill="#8f1111" opacity="0.8"/><path d="M3.30 10.20L4.70 10.20" stroke="#8f1111" stroke-width="1.1" stroke-linecap="round"/><circle cx="4.18" cy="6.90" r="0.55" fill="#8f1111" opacity="0.8"/><circle cx="6.60" cy="4.48" r="0.55" fill="#8f1111" opacity="0.8"/><path d="M10.6 10.6L14 6.6M10.6 10.6L8 8" fill="none" stroke="#8f1111" stroke-width="1.2" stroke-linecap="round"/><circle cx="14.5" cy="14.9" r="6.1" fill="#cf2f2f"/><path d="M11.6 12L17.6 18M17.6 12L11.6 18" stroke="#fff" stroke-width="2.4" stroke-linecap="butt"/></g></svg>
<svg class="a" style="left:478px;top:406px" width="18" height="18" ><rect x="1" y="1" width="16" height="16" fill="#fff" stroke="#3a6fa8" stroke-width="2"/><path d="M3.4 9.6L7 12.6L14.8 4.6" fill="none" stroke="#25ac0a" stroke-width="1.7" stroke-linecap="round" stroke-linejoin="round"/></svg>
<span class="t" style="left:542.00px;top:407px;font-size:14px;letter-spacing:-0.058px;color:#212529;text-decoration:underline;">Delete labeled items</span>
<div class="a clip" style="left:797px;top:394px;width:174px;height:39px"><span class="t" style="left:7.30px;top:13px;font-size:14px;color:#212529;text-decoration:underline;letter-spacing:-0.437px;">Remove Files with Delete Label</span></div>
<span class="t" style="left:978.80px;top:407px;font-size:14px;letter-spacing:-0.102px;color:#212529;">11/27/2023 2:30:...</span>
<div class="a clip" style="left:1103px;top:394px;width:203px;height:39px"><span class="t" style="left:7.30px;top:13px;font-size:14px;color:#212529;text-decoration:underline;letter-spacing:-0.1px;">Finished in 0 Hours 1 Minute 57 Seconds</span></div>
<span class="t" style="left:1347.27px;top:407px;font-size:14px;color:#212529;">NA</span>
<span class="t" style="left:1455.10px;top:407px;font-size:14px;color:#212529;">0</span>
<span class="t" style="left:1517.80px;top:407px;font-size:14px;letter-spacing:-0.058px;color:#212529;">11/27/2023 12:4...</span>
<span class="t" style="left:1648.80px;top:407px;font-size:14px;letter-spacing:-0.102px;color:#212529;">11/27/2023 2:25:...</span>
<div class="a" style="left:534px;top:434px;width:262px;height:38px;background:#fafafa;"></div>
<div class="a" style="left:257px;top:472px;width:1646px;height:1px;background:#dee2e6;"></div>
<div class="a" style="left:279px;top:445px;width:14px;height:14px;border:1px solid #8b90a3;border-radius:3px;box-sizing:border-box;background:#fff;"></div>
<span class="t" style="left:323.60px;top:446px;font-size:14px;letter-spacing:-0.081px;color:#212529;">Live - Manual</span>
<svg class="a" style="left:453px;top:443px" width="23" height="23" ><g transform="translate(0.500 0.100)"><circle cx="9.9" cy="10.2" r="8.6" fill="#fff" stroke="#8f1111" stroke-width="2"/><path d="M9.90 3.60L9.90 5.00" stroke="#8f1111" stroke-width="1.1" stroke-linecap="round"/><circle cx="13.20" cy="4.48" r="0.55" fill="#8f1111" opacity="0.8"/><circle cx="15.62" cy="6.90" r="0.55" fill="#8f1111" opacity="0.8"/><circle cx="6.60" cy="15.92" r="0.55" fill="#8f1111" opacity="0.8"/><circle cx="4.18" cy="13.50" r="0.55" fill="#8f1111" opacity="0.8"/><path d="M3.30 10.20L4.70 10.20" stroke="#8f1111" stroke-width="1.1" stroke-linecap="round"/><circle cx="4.18" cy="6.90" r="0.55" fill="#8f1111" opacity="0.8"/><circle cx="6.60" cy="4.48" r="0.55" fill="#8f1111" opacity="0.8"/><path d="M10.6 10.6L14 6.6M10.6 10.6L8 8" fill="none" stroke="#8f1111" stroke-width="1.2" stroke-linecap="round"/><circle cx="14.5" cy="14.9" r="6.1" fill="#cf2f2f"/><path d="M11.6 12L17.6 18M17.6 12L11.6 18" stroke="#fff" stroke-width="2.4" stroke-linecap="butt"/></g></svg>
<svg class="a" style="left:478px;top:445px" width="18" height="18" ><rect x="1" y="1" width="16" height="16" fill="#fff" stroke="#3a6fa8" stroke-width="2"/><path d="M3.4 9.6L7 12.6L14.8 4.6" fill="none" stroke="#25ac0a" stroke-width="1.7" stroke-linecap="round" stroke-linejoin="round"/></svg>
<span class="t" style="left:542.00px;top:446px;font-size:14px;letter-spacing:-0.347px;color:#212529;text-decoration:underline;">EWS Data Owner Test Policy</span>
<span class="t" style="left:804.30px;top:446px;font-size:14px;letter-spacing:-0.319px;color:#212529;text-decoration:underline;">EWS Data Owner Report</span>
<span class="t" style="left:978.80px;top:446px;font-size:14px;letter-spacing:-0.058px;color:#212529;">10/10/2024 11:4...</span>
<div class="a clip" style="left:1103px;top:434px;width:203px;height:38px"><span class="t" style="left:7.30px;top:12px;font-size:14px;color:#212529;text-decoration:underline;letter-spacing:-0.1px;">Finished in 0 Hours 3 Minutes 34 Seconds</span></div>
<span class="t" style="left:1353.10px;top:446px;font-size:14px;color:#212529;text-decoration:underline;">1</span>
<span class="t" style="left:1455.10px;top:446px;font-size:14px;color:#212529;">0</span>
<span class="t" style="left:1517.80px;top:446px;font-size:14px;letter-spacing:-0.156px;color:#212529;">9/16/2024 4:19:5...</span>
<span class="t" style="left:1648.80px;top:446px;font-size:14px;letter-spacing:-0.156px;color:#212529;">9/16/2024 4:23:0...</span>
<div class="a" style="left:257px;top:512px;width:1646px;height:1px;background:#dee2e6;"></div>
<div class="a" style="left:279px;top:485px;width:14px;height:14px;border:1px solid #8b90a3;border-radius:3px;box-sizing:border-box;background:#fff;"></div>
<span class="t" style="left:323.60px;top:486px;font-size:14px;letter-spacing:-0.081px;color:#212529;">Live - Manual</span>
<svg class="a" style="left:453px;top:483px" width="23" height="23" ><g transform="translate(0.500 0.100)"><circle cx="9.9" cy="10.2" r="8.6" fill="#fff" stroke="#8f1111" stroke-width="2"/><path d="M9.90 3.60L9.90 5.00" stroke="#8f1111" stroke-width="1.1" stroke-linecap="round"/><circle cx="13.20" cy="4.48" r="0.55" fill="#8f1111" opacity="0.8"/><circle cx="15.62" cy="6.90" r="0.55" fill="#8f1111" opacity="0.8"/><circle cx="6.60" cy="15.92" r="0.55" fill="#8f1111" opacity="0.8"/><circle cx="4.18" cy="13.50" r="0.55" fill="#8f1111" opacity="0.8"/><path d="M3.30 10.20L4.70 10.20" stroke="#8f1111" stroke-width="1.1" stroke-linecap="round"/><circle cx="4.18" cy="6.90" r="0.55" fill="#8f1111" opacity="0.8"/><circle cx="6.60" cy="4.48" r="0.55" fill="#8f1111" opacity="0.8"/><path d="M10.6 10.6L14 6.6M10.6 10.6L8 8" fill="none" stroke="#8f1111" stroke-width="1.2" stroke-linecap="round"/><circle cx="14.5" cy="14.9" r="6.1" fill="#cf2f2f"/><path d="M11.6 12L17.6 18M17.6 12L11.6 18" stroke="#fff" stroke-width="2.4" stroke-linecap="butt"/></g></svg>
<svg class="a" style="left:478px;top:485px" width="18" height="18" ><rect x="1" y="1" width="16" height="16" fill="#fff" stroke="#3a6fa8" stroke-width="2"/><path d="M3.4 9.6L7 12.6L14.8 4.6" fill="none" stroke="#25ac0a" stroke-width="1.7" stroke-linecap="round" stroke-linejoin="round"/></svg>
<span class="t" style="left:542.00px;top:486px;font-size:14px;letter-spacing:-0.357px;color:#212529;text-decoration:underline;">HK Policy Test</span>
<span class="t" style="left:804.30px;top:486px;font-size:14px;letter-spacing:-0.720px;color:#212529;text-decoration:underline;">HK PST Test</span>
<span class="t" style="left:978.80px;top:486px;font-size:14px;letter-spacing:-0.115px;color:#212529;">10/21/2024 12:0...</span>
<div class="a clip" style="left:1103px;top:473px;width:203px;height:39px"><span class="t" style="left:7.30px;top:13px;font-size:14px;color:#212529;text-decoration:underline;letter-spacing:-0.1px;">Finished in 0 Hours 9 Minutes 10 Seconds</span></div>
<span class="t" style="left:1347.27px;top:486px;font-size:14px;color:#212529;">NA</span>
<span class="t" style="left:1455.10px;top:486px;font-size:14px;color:#212529;">0</span>
<span class="t" style="left:1517.80px;top:486px;font-size:14px;letter-spacing:-0.058px;color:#212529;">10/21/2024 11:5...</span>
<span class="t" style="left:1648.80px;top:486px;font-size:14px;letter-spacing:-0.058px;color:#212529;">10/21/2024 11:5...</span>
<div class="a" style="left:534px;top:513px;width:262px;height:38px;background:#fafafa;"></div>
<div class="a" style="left:257px;top:551px;width:1646px;height:1px;background:#dee2e6;"></div>
<div class="a" style="left:279px;top:524px;width:14px;height:14px;border:1px solid #8b90a3;border-radius:3px;box-sizing:border-box;background:#fff;"></div>
<span class="t" style="left:323.60px;top:525px;font-size:14px;letter-spacing:-0.081px;color:#212529;">Live - Manual</span>
<svg class="a" style="left:453px;top:522px" width="23" height="23" ><g transform="translate(0.500 0.100)"><circle cx="9.9" cy="10.2" r="8.6" fill="#fff" stroke="#8f1111" stroke-width="2"/><path d="M9.90 3.60L9.90 5.00" stroke="#8f1111" stroke-width="1.1" stroke-linecap="round"/><circle cx="13.20" cy="4.48" r="0.55" fill="#8f1111" opacity="0.8"/><circle cx="15.62" cy="6.90" r="0.55" fill="#8f1111" opacity="0.8"/><circle cx="6.60" cy="15.92" r="0.55" fill="#8f1111" opacity="0.8"/><circle cx="4.18" cy="13.50" r="0.55" fill="#8f1111" opacity="0.8"/><path d="M3.30 10.20L4.70 10.20" stroke="#8f1111" stroke-width="1.1" stroke-linecap="round"/><circle cx="4.18" cy="6.90" r="0.55" fill="#8f1111" opacity="0.8"/><circle cx="6.60" cy="4.48" r="0.55" fill="#8f1111" opacity="0.8"/><path d="M10.6 10.6L14 6.6M10.6 10.6L8 8" fill="none" stroke="#8f1111" stroke-width="1.2" stroke-linecap="round"/><circle cx="14.5" cy="14.9" r="6.1" fill="#cf2f2f"/><path d="M11.6 12L17.6 18M17.6 12L11.6 18" stroke="#fff" stroke-width="2.4" stroke-linecap="butt"/></g></svg>
<svg class="a" style="left:478px;top:524px" width="18" height="18" ><rect x="1" y="1" width="16" height="16" fill="#fff" stroke="#3a6fa8" stroke-width="2"/><path d="M3.4 9.6L7 12.6L14.8 4.6" fill="none" stroke="#25ac0a" stroke-width="1.7" stroke-linecap="round" stroke-linejoin="round"/></svg>
<span class="t" style="left:542.00px;top:525px;font-size:14px;letter-spacing:-0.200px;color:#212529;text-decoration:underline;">MIP Label Report</span>
<div class="a clip" style="left:797px;top:513px;width:174px;height:38px"><span class="t" style="left:7.30px;top:12px;font-size:14px;color:#212529;text-decoration:underline;letter-spacing:-0.246px;">Files With MIP Labels Report</span></div>
<span class="t" style="left:978.80px;top:525px;font-size:14px;letter-spacing:-0.156px;color:#212529;">7/29/2024 3:52:2...</span>
<div class="a clip" style="left:1103px;top:513px;width:203px;height:38px"><span class="t" style="left:7.30px;top:12px;font-size:14px;color:#212529;text-decoration:underline;letter-spacing:-0.1px;">Finished in 0 Hours 10 Minutes 43 Seconds</span></div>
<span class="t" style="left:1353.10px;top:525px;font-size:14px;color:#212529;">0</span>
<span class="t" style="left:1455.10px;top:525px;font-size:14px;color:#212529;">0</span>
<span class="t" style="left:1517.80px;top:525px;font-size:14px;letter-spacing:-0.156px;color:#212529;">7/29/2024 3:18:1...</span>
<span class="t" style="left:1648.80px;top:525px;font-size:14px;letter-spacing:-0.156px;color:#212529;">7/29/2024 3:42:2...</span>
<div class="a" style="left:257px;top:591px;width:1646px;height:1px;background:#dee2e6;"></div>
<div class="a" style="left:279px;top:564px;width:14px;height:14px;border:1px solid #8b90a3;border-radius:3px;box-sizing:border-box;background:#fff;"></div>
<span class="t" style="left:323.60px;top:565px;font-size:14px;letter-spacing:-0.081px;color:#212529;">Live - Manual</span>
<svg class="a" style="left:453px;top:562px" width="23" height="23" ><g transform="translate(0.500 0.100)"><circle cx="9.9" cy="10.2" r="8.6" fill="#fff" stroke="#8f1111" stroke-width="2"/><path d="M9.90 3.60L9.90 5.00" stroke="#8f1111" stroke-width="1.1" stroke-linecap="round"/><circle cx="13.20" cy="4.48" r="0.55" fill="#8f1111" opacity="0.8"/><circle cx="15.62" cy="6.90" r="0.55" fill="#8f1111" opacity="0.8"/><circle cx="6.60" cy="15.92" r="0.55" fill="#8f1111" opacity="0.8"/><circle cx="4.18" cy="13.50" r="0.55" fill="#8f1111" opacity="0.8"/><path d="M3.30 10.20L4.70 10.20" stroke="#8f1111" stroke-width="1.1" stroke-linecap="round"/><circle cx="4.18" cy="6.90" r="0.55" fill="#8f1111" opacity="0.8"/><circle cx="6.60" cy="4.48" r="0.55" fill="#8f1111" opacity="0.8"/><path d="M10.6 10.6L14 6.6M10.6 10.6L8 8" fill="none" stroke="#8f1111" stroke-width="1.2" stroke-linecap="round"/><circle cx="14.5" cy="14.9" r="6.1" fill="#cf2f2f"/><path d="M11.6 12L17.6 18M17.6 12L11.6 18" stroke="#fff" stroke-width="2.4" stroke-linecap="butt"/></g></svg>
<svg class="a" style="left:478px;top:564px" width="18" height="18" ><rect x="1" y="1" width="16" height="16" fill="#fff" stroke="#3a6fa8" stroke-width="2"/><path d="M3.4 9.6L7 12.6L14.8 4.6" fill="none" stroke="#25ac0a" stroke-width="1.7" stroke-linecap="round" stroke-linejoin="round"/></svg>
<span class="t" style="left:542.00px;top:565px;font-size:14px;letter-spacing:-0.273px;color:#212529;text-decoration:underline;">MIP Test Policy</span>
<span class="t" style="left:804.30px;top:565px;font-size:14px;letter-spacing:-0.300px;color:#212529;text-decoration:underline;">Assign MIP Labels</span>
<span class="t" style="left:978.80px;top:565px;font-size:14px;letter-spacing:-0.156px;color:#212529;">6/13/2024 5:24:5...</span>
<div class="a clip" style="left:1103px;top:552px;width:203px;height:39px"><span class="t" style="left:7.30px;top:13px;font-size:14px;color:#212529;text-decoration:underline;letter-spacing:-0.1px;">Finished in 0 Hours 3 Minutes 54 Seconds</span></div>
<span class="t" style="left:1347.27px;top:565px;font-size:14px;color:#212529;">NA</span>
<span class="t" style="left:1455.10px;top:565px;font-size:14px;color:#212529;">0</span>
<span class="t" style="left:1517.80px;top:565px;font-size:14px;letter-spacing:-0.156px;color:#212529;">6/13/2024 5:21:3...</span>
<span class="t" style="left:1648.80px;top:565px;font-size:14px;letter-spacing:-0.156px;color:#212529;">6/13/2024 5:21:3...</span>
<div class="a" style="left:534px;top:592px;width:262px;height:38px;background:#fafafa;"></div>
<div class="a" style="left:257px;top:630px;width:1646px;height:1px;background:#dee2e6;"></div>
<div class="a" style="left:279px;top:603px;width:14px;height:14px;border:1px solid #8b90a3;border-radius:3px;box-sizing:border-box;background:#fff;"></div>
<span class="t" style="left:323.60px;top:604px;font-size:14px;letter-spacing:-0.081px;color:#212529;">Live - Manual</span>
<svg class="a" style="left:453px;top:601px" width="23" height="23" ><g transform="translate(0.500 0.100)"><circle cx="9.9" cy="10.2" r="8.6" fill="#fff" stroke="#8f1111" stroke-width="2"/><path d="M9.90 3.60L9.90 5.00" stroke="#8f1111" stroke-width="1.1" stroke-linecap="round"/><circle cx="13.20" cy="4.48" r="0.55" fill="#8f1111" opacity="0.8"/><circle cx="15.62" cy="6.90" r="0.55" fill="#8f1111" opacity="0.8"/><circle cx="6.60" cy="15.92" r="0.55" fill="#8f1111" opacity="0.8"/><circle cx="4.18" cy="13.50" r="0.55" fill="#8f1111" opacity="0.8"/><path d="M3.30 10.20L4.70 10.20" stroke="#8f1111" stroke-width="1.1" stroke-linecap="round"/><circle cx="4.18" cy="6.90" r="0.55" fill="#8f1111" opacity="0.8"/><circle cx="6.60" cy="4.48" r="0.55" fill="#8f1111" opacity="0.8"/><path d="M10.6 10.6L14 6.6M10.6 10.6L8 8" fill="none" stroke="#8f1111" stroke-width="1.2" stroke-linecap="round"/><circle cx="14.5" cy="14.9" r="6.1" fill="#cf2f2f"/><path d="M11.6 12L17.6 18M17.6 12L11.6 18" stroke="#fff" stroke-width="2.4" stroke-linecap="butt"/></g></svg>
<svg class="a" style="left:478px;top:603px" width="18" height="18" ><rect x="1" y="1" width="16" height="16" fill="#fff" stroke="#3a6fa8" stroke-width="2"/><path d="M3.4 9.6L7 12.6L14.8 4.6" fill="none" stroke="#25ac0a" stroke-width="1.7" stroke-linecap="round" stroke-linejoin="round"/></svg>
<span class="t" style="left:542.00px;top:604px;font-size:14px;letter-spacing:-0.222px;color:#212529;text-decoration:underline;">Owner Test Policy</span>
<span class="t" style="left:804.30px;top:604px;font-size:14px;letter-spacing:-0.206px;color:#212529;text-decoration:underline;">Data Owner Test2</span>
<span class="t" style="left:978.80px;top:604px;font-size:14px;letter-spacing:-0.156px;color:#212529;">9/16/2021 4:22:4...</span>
<div class="a clip" style="left:1103px;top:592px;width:203px;height:38px"><span class="t" style="left:7.30px;top:12px;font-size:14px;color:#212529;text-decoration:underline;letter-spacing:-0.1px;">Finished in 0 Hours 3 Minutes 21 Seconds</span></div>
<span class="t" style="left:1353.10px;top:604px;font-size:14px;color:#212529;">0</span>
<span class="t" style="left:1455.10px;top:604px;font-size:14px;color:#212529;">0</span>
<span class="t" style="left:1517.80px;top:604px;font-size:14px;letter-spacing:-0.102px;color:#212529;">9/16/2021 11:51:...</span>
<span class="t" style="left:1648.80px;top:604px;font-size:14px;letter-spacing:-0.102px;color:#212529;">9/16/2021 11:51:...</span>
<div class="a" style="left:257px;top:670px;width:1646px;height:1px;background:#dee2e6;"></div>
<div class="a" style="left:279px;top:643px;width:14px;height:14px;border:1px solid #8b90a3;border-radius:3px;box-sizing:border-box;background:#fff;"></div>
<span class="t" style="left:323.60px;top:644px;font-size:14px;letter-spacing:-0.081px;color:#212529;">Live - Manual</span>
<svg class="a" style="left:453px;top:641px" width="23" height="23" ><g transform="translate(0.500 0.100)"><circle cx="9.9" cy="10.2" r="8.6" fill="#fff" stroke="#8f1111" stroke-width="2"/><path d="M9.90 3.60L9.90 5.00" stroke="#8f1111" stroke-width="1.1" stroke-linecap="round"/><circle cx="13.20" cy="4.48" r="0.55" fill="#8f1111" opacity="0.8"/><circle cx="15.62" cy="6.90" r="0.55" fill="#8f1111" opacity="0.8"/><circle cx="6.60" cy="15.92" r="0.55" fill="#8f1111" opacity="0.8"/><circle cx="4.18" cy="13.50" r="0.55" fill="#8f1111" opacity="0.8"/><path d="M3.30 10.20L4.70 10.20" stroke="#8f1111" stroke-width="1.1" stroke-linecap="round"/><circle cx="4.18" cy="6.90" r="0.55" fill="#8f1111" opacity="0.8"/><circle cx="6.60" cy="4.48" r="0.55" fill="#8f1111" opacity="0.8"/><path d="M10.6 10.6L14 6.6M10.6 10.6L8 8" fill="none" stroke="#8f1111" stroke-width="1.2" stroke-linecap="round"/><circle cx="14.5" cy="14.9" r="6.1" fill="#cf2f2f"/><path d="M11.6 12L17.6 18M17.6 12L11.6 18" stroke="#fff" stroke-width="2.4" stroke-linecap="butt"/></g></svg>
<svg class="a" style="left:478px;top:643px" width="18" height="18" ><rect x="1" y="1" width="16" height="16" fill="#fff" stroke="#3a6fa8" stroke-width="2"/><path d="M3.4 9.6L7 12.6L14.8 4.6" fill="none" stroke="#25ac0a" stroke-width="1.7" stroke-linecap="round" stroke-linejoin="round"/></svg>
<span class="t" style="left:542.00px;top:644px;font-size:14px;letter-spacing:-0.510px;color:#212529;text-decoration:underline;">ROTAssessment Policy</span>
<span class="t" style="left:804.30px;top:644px;font-size:14px;letter-spacing:-0.389px;color:#212529;text-decoration:underline;">ROT Assessment Report</span>
<span class="t" style="left:978.80px;top:644px;font-size:14px;letter-spacing:-0.156px;color:#212529;">9/26/2023 4:18:1...</span>
<div class="a clip" style="left:1103px;top:631px;width:203px;height:39px"><span class="t" style="left:7.30px;top:13px;font-size:14px;color:#212529;text-decoration:underline;letter-spacing:-0.1px;">Finished in 0 Hours 23 Minutes 41 Seconds</span></div>
<span class="t" style="left:1353.10px;top:644px;font-size:14px;color:#212529;">0</span>
<span class="t" style="left:1455.10px;top:644px;font-size:14px;color:#212529;">0</span>
<span class="t" style="left:1517.80px;top:644px;font-size:14px;letter-spacing:-0.156px;color:#212529;">8/22/2023 9:49:0...</span>
<span class="t" style="left:1648.80px;top:644px;font-size:14px;letter-spacing:-0.156px;color:#212529;">8/22/2023 9:49:4...</span>
<div class="a" style="left:534px;top:671px;width:262px;height:38px;background:#fafafa;"></div>
<div class="a" style="left:257px;top:709px;width:1646px;height:1px;background:#dee2e6;"></div>
<div class="a" style="left:279px;top:682px;width:14px;height:14px;border:1px solid #8b90a3;border-radius:3px;box-sizing:border-box;background:#fff;"></div>
<span class="t" style="left:323.60px;top:683px;font-size:14px;letter-spacing:-0.081px;color:#212529;">Live - Manual</span>
<svg class="a" style="left:453px;top:680px" width="23" height="23" ><g transform="translate(0.500 0.100)"><circle cx="9.9" cy="10.2" r="8.6" fill="#fff" stroke="#8f1111" stroke-width="2"/><path d="M9.90 3.60L9.90 5.00" stroke="#8f1111" stroke-width="1.1" stroke-linecap="round"/><circle cx="13.20" cy="4.48" r="0.55" fill="#8f1111" opacity="0.8"/><circle cx="15.62" cy="6.90" r="0.55" fill="#8f1111" opacity="0.8"/><circle cx="6.60" cy="15.92" r="0.55" fill="#8f1111" opacity="0.8"/><circle cx="4.18" cy="13.50" r="0.55" fill="#8f1111" opacity="0.8"/><path d="M3.30 10.20L4.70 10.20" stroke="#8f1111" stroke-width="1.1" stroke-linecap="round"/><circle cx="4.18" cy="6.90" r="0.55" fill="#8f1111" opacity="0.8"/><circle cx="6.60" cy="4.48" r="0.55" fill="#8f1111" opacity="0.8"/><path d="M10.6 10.6L14 6.6M10.6 10.6L8 8" fill="none" stroke="#8f1111" stroke-width="1.2" stroke-linecap="round"/><circle cx="14.5" cy="14.9" r="6.1" fill="#cf2f2f"/><path d="M11.6 12L17.6 18M17.6 12L11.6 18" stroke="#fff" stroke-width="2.4" stroke-linecap="butt"/></g></svg>
<svg class="a" style="left:478px;top:682px" width="18" height="18" ><rect x="1" y="1" width="16" height="16" fill="#fff" stroke="#3a6fa8" stroke-width="2"/><path d="M3.4 9.6L7 12.6L14.8 4.6" fill="none" stroke="#25ac0a" stroke-width="1.7" stroke-linecap="round" stroke-linejoin="round"/></svg>
<span class="t" style="left:542.00px;top:683px;font-size:14px;letter-spacing:-0.257px;color:#212529;text-decoration:underline;">Sensitive Data Policy (Works)</span>
<span class="t" style="left:804.30px;top:683px;font-size:14px;letter-spacing:-0.360px;color:#212529;text-decoration:underline;">Sensitive File Data Scan</span>
<span class="t" style="left:978.80px;top:683px;font-size:14px;letter-spacing:-0.058px;color:#212529;">11/27/2023 12:4...</span>
<div class="a clip" style="left:1103px;top:671px;width:203px;height:38px"><span class="t" style="left:7.30px;top:12px;font-size:14px;color:#212529;text-decoration:underline;letter-spacing:-0.1px;">Finished in 0 Hours 8 Minutes 13 Seconds</span></div>
<span class="t" style="left:1353.10px;top:683px;font-size:14px;color:#212529;">0</span>
<span class="t" style="left:1455.10px;top:683px;font-size:14px;color:#212529;">0</span>
<span class="t" style="left:1517.80px;top:683px;font-size:14px;letter-spacing:-0.156px;color:#212529;">9/5/2023 6:16:04...</span>
<span class="t" style="left:1648.80px;top:683px;font-size:14px;letter-spacing:-0.102px;color:#212529;">11/27/2023 2:38:...</span>
<div class="a" style="left:279px;top:722px;width:14px;height:14px;border:1px solid #8b90a3;border-radius:3px;box-sizing:border-box;background:#fff;"></div>
<span class="t" style="left:323.60px;top:723px;font-size:14px;letter-spacing:-0.081px;color:#212529;">Live - Manual</span>
<svg class="a" style="left:453px;top:720px" width="23" height="23" ><g transform="translate(0.500 0.100)"><circle cx="9.9" cy="10.2" r="8.6" fill="#fff" stroke="#8f1111" stroke-width="2"/><path d="M9.90 3.60L9.90 5.00" stroke="#8f1111" stroke-width="1.1" stroke-linecap="round"/><circle cx="13.20" cy="4.48" r="0.55" fill="#8f1111" opacity="0.8"/><circle cx="15.62" cy="6.90" r="0.55" fill="#8f1111" opacity="0.8"/><circle cx="6.60" cy="15.92" r="0.55" fill="#8f1111" opacity="0.8"/><circle cx="4.18" cy="13.50" r="0.55" fill="#8f1111" opacity="0.8"/><path d="M3.30 10.20L4.70 10.20" stroke="#8f1111" stroke-width="1.1" stroke-linecap="round"/><circle cx="4.18" cy="6.90" r="0.55" fill="#8f1111" opacity="0.8"/><circle cx="6.60" cy="4.48" r="0.55" fill="#8f1111" opacity="0.8"/><path d="M10.6 10.6L14 6.6M10.6 10.6L8 8" fill="none" stroke="#8f1111" stroke-width="1.2" stroke-linecap="round"/><circle cx="14.5" cy="14.9" r="6.1" fill="#cf2f2f"/><path d="M11.6 12L17.6 18M17.6 12L11.6 18" stroke="#fff" stroke-width="2.4" stroke-linecap="butt"/></g></svg>
<svg class="a" style="left:478px;top:722px" width="18" height="18" ><rect x="1" y="1" width="16" height="16" fill="#fff" stroke="#3a6fa8" stroke-width="2"/><path d="M3.4 9.6L7 12.6L14.8 4.6" fill="none" stroke="#25ac0a" stroke-width="1.7" stroke-linecap="round" stroke-linejoin="round"/></svg>
<span class="t" style="left:542.00px;top:722px;font-size:14px;letter-spacing:-0.307px;color:#212529;text-decoration:underline;">Teams Objects</span>
<svg class="a" style="left:653px;top:719px" width="21" height="20" ><defs><linearGradient id="sg" x1="0" y1="0" x2="0" y2="1"><stop offset="0" stop-color="#4c8dec"/><stop offset="0.25" stop-color="#3078df"/><stop offset="1" stop-color="#2b72d8"/></linearGradient></defs><rect x="0.2" y="0.2" width="20.6" height="19.6" rx="3.4" fill="#fff" opacity="0.9"/><rect x="1.4" y="1.4" width="18.2" height="17.2" rx="2.6" fill="url(#sg)" stroke="#125aca" stroke-width="1"/><path d="M14.7 6.1L6.2 10.4L14.7 14.8" fill="none" stroke="#fff" stroke-width="1.3"/><g fill="#fff"><circle cx="6.2" cy="10.4" r="2.3"/><circle cx="14.7" cy="6.1" r="2.3"/><circle cx="14.7" cy="14.8" r="2.3"/></g></svg>
<span class="t" style="left:804.30px;top:723px;font-size:14px;letter-spacing:-0.307px;color:#212529;text-decoration:underline;">Teams Objects</span>
<span class="t" style="left:978.80px;top:723px;font-size:14px;letter-spacing:-0.156px;color:#212529;">9/14/2021 3:00:4...</span>
<div class="a clip" style="left:1103px;top:710px;width:203px;height:39px"><span class="t" style="left:7.30px;top:13px;font-size:14px;color:#212529;text-decoration:underline;letter-spacing:-0.1px;">Finished in 0 Hours 6 Minutes 3 Seconds</span></div>
<span class="t" style="left:1353.10px;top:723px;font-size:14px;color:#212529;">0</span>
<span class="t" style="left:1455.10px;top:723px;font-size:14px;color:#212529;">0</span>
<span class="t" style="left:1517.80px;top:723px;font-size:14px;letter-spacing:-0.156px;color:#212529;">9/14/2021 2:52:0...</span>
<span class="t" style="left:1648.80px;top:723px;font-size:14px;letter-spacing:-0.156px;color:#212529;">9/14/2021 2:52:0...</span>
<div class="a" style="left:1640px;top:881px;width:264px;height:22px;background:linear-gradient(90deg,rgba(244,244,245,0) 0%,#f4f4f5 9%,#f2f2f3 40%,#f0f0f0 50%,#f0f0f0 100%);"></div>
<span class="t" style="left:1754.50px;top:885px;font-size:15px;letter-spacing:-0.051px;color:#2b3035;">1 - 12 of 12 policies</span>
<div class="a" style="left:240px;top:923px;width:1678px;height:26px;background:#343a40;"></div>
<span class="t" style="left:986.00px;top:931px;font-size:12px;letter-spacing:0.002px;color:#fff;">© 2025 - Gimmal Discover - </span>
<span class="t" style="left:1137.60px;top:931px;font-size:12px;letter-spacing:-0.363px;color:#fff;text-decoration:underline;">Privacy</span>
<div class="top"></div><div class="bot"></div><div class="bot2"></div>
</body>
</html>
